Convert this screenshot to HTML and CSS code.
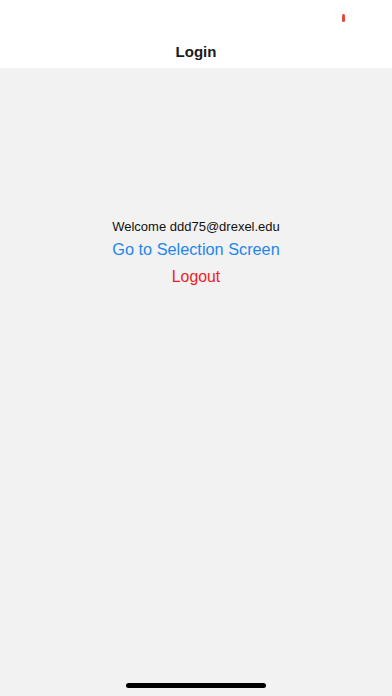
FILE: index.html
```html
<!DOCTYPE html>
<html>
<head>
<meta charset="utf-8">
<link rel="stylesheet" href="styles.css">
</head>
<body>
<div class="screen">
  <header class="header">
    <div class="status"><span class="dot"></span></div>
    <h1 class="title">Login</h1>
  </header>
  <main class="content">
    <p class="welcome">Welcome ddd75@drexel.edu</p>
    <a class="link blue">Go to Selection Screen</a>
    <a class="link red">Logout</a>
  </main>
  <div class="home"><span class="bar"></span></div>
</div>
</body>
</html>
```
FILE: styles.css
```css
html, body { margin: 0; padding: 0; }
body { font-family: "Liberation Sans", Arial, sans-serif; background: #f2f2f2; }
.screen { width: 392px; height: 696px; display: flex; flex-direction: column; background: #f2f2f2; position: relative; }
.header { background: #ffffff; height: 68px; display: flex; flex-direction: column; box-sizing: border-box; }
.status { height: 41px; display: flex; justify-content: flex-end; padding-right: 47px; padding-top: 14px; box-sizing: border-box; }
.dot { width: 3px; height: 8px; border-radius: 1.5px; background: #e8453c; }
.title { margin: 0; font-size: 15px; font-weight: bold; text-align: center; color: #1a1a1a; line-height: 22px; }
.content { flex: 1; display: flex; flex-direction: column; align-items: center; padding-top: 150px; }
.welcome { margin: 0; font-size: 13px; color: #111; line-height: 18px; }
.link { display: block; cursor: pointer; }
.blue { color: #1f86ee; font-size: 16.3px; line-height: 22px; margin-top: 2px; }
.red { color: #ee1c25; font-size: 15.8px; line-height: 20px; margin-top: 7px; }
.home { position: absolute; left: 0; right: 0; bottom: 8px; display: flex; justify-content: center; }
.bar { width: 140px; height: 5px; border-radius: 3px; background: #000; }
```
